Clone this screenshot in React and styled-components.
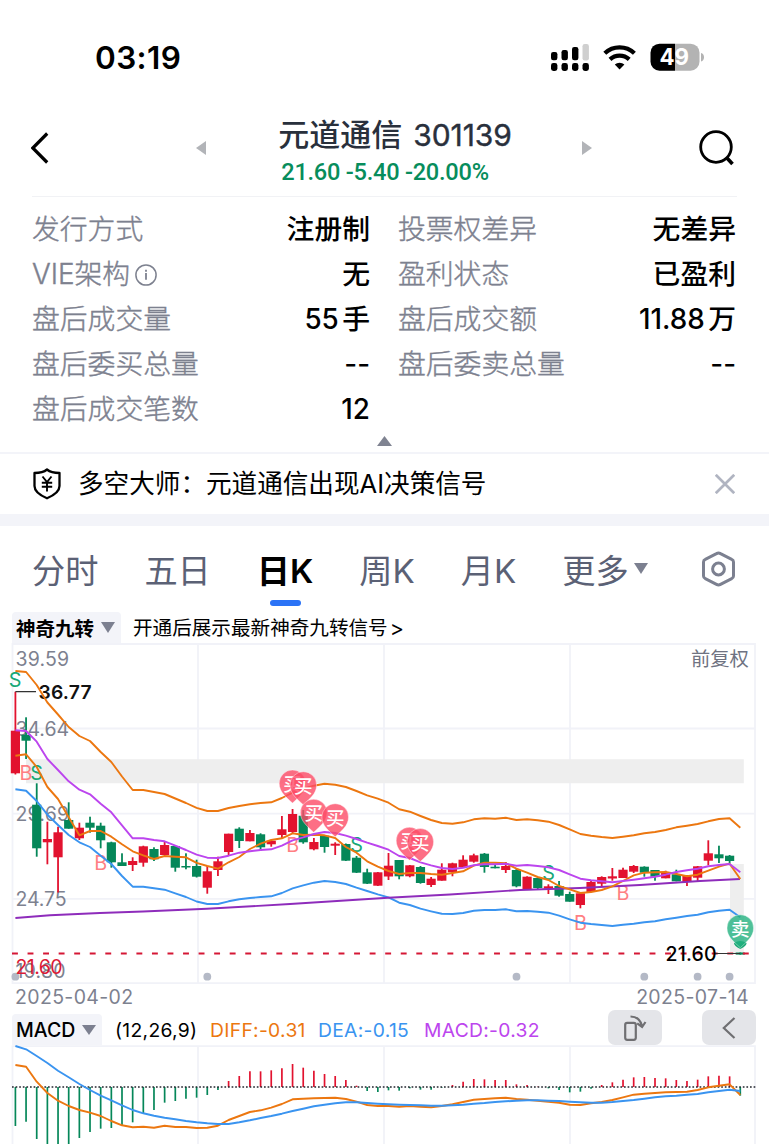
import React from 'react';
import styled, { createGlobalStyle } from 'styled-components';

const GlobalStyle = createGlobalStyle`
  * { box-sizing: border-box; }
  body { margin: 0; background: #fff; }
`;

const sans = `Inter, "Noto Sans CJK SC", sans-serif`;

const Screen = styled.main`
  width: 769px;
  height: 1144px;
  overflow: hidden;
  display: flex;
  flex-direction: column;
  background: #fff;
  color: #000;
  font-family: ${sans};
  white-space: nowrap;
  svg { display: block; flex: none; }
`;

const StatusBar = styled.div`
  height: 100px;
  flex: none;
  display: flex;
  justify-content: space-between;
  padding: 43px 64px 0 95px;
`;

const Clock = styled.div`
  font-size: 31.5px;
  line-height: 30px;
  font-weight: 600;
  letter-spacing: 0.4px;
`;

const StatusIcons = styled.div`
  display: flex;
  gap: 13px;
`;

const Header = styled.header`
  height: 97px;
  flex: none;
  margin: 0 32px;
  border-bottom: 1px solid #f1f2f5;
  display: grid;
  grid-template-columns: 174px 1fr 153px;
`;

const HeaderSide = styled.div`
  display: flex;
  align-items: center;
  justify-content: space-between;
  height: 96px;
  padding-right: ${(p) => p.$end || 0}px;
  margin-left: ${(p) => p.$start || 0}px;
`;

const Title = styled.div`
  padding-top: 17px;
  display: flex;
  flex-direction: column;
  align-items: center;
`;

const StockName = styled.div`
  display: flex;
  gap: 11px;
  height: 36px;
  line-height: 36px;
  font-size: 31px;
  font-weight: 500;
  color: #29303c;
`;

const Code = styled.span`
  font-size: 30px;
  font-weight: 400;
  letter-spacing: -0.1px;
  -webkit-text-stroke: 0.4px #29303c;
`;

const Quote = styled.div`
  margin: 6px 20px 0 0;
  font: 500 23.6px/26px Roboto, sans-serif;
  letter-spacing: -0.25px;
  color: #078d5c;
`;

const Facts = styled.section`
  flex: none;
  height: 255px;
  padding: 10px 33px 0 32px;
  display: flex;
  flex-direction: column;
  align-items: center;
  gap: 4px;
`;

const FactGrid = styled.div`
  width: 100%;
  display: grid;
  grid-template-columns: 338px 338px;
  column-gap: 28px;
  grid-auto-rows: 45px;
`;

const Fact = styled.div`
  display: flex;
  align-items: center;
  justify-content: space-between;
  font-size: 27.8px;
  line-height: 45px;
`;

const FactLabel = styled.span`
  display: flex;
  align-items: center;
  gap: 5px;
  color: #7d818f;
  font-weight: 300;
  -webkit-text-stroke: 0.4px #7d818f;
`;

const FactValue = styled.span`
  font-weight: 500;
  word-spacing: -4px;
`;

const Alert = styled.section`
  flex: none;
  height: 74px;
  border-top: 2px solid #f3f4f9;
  border-bottom: 12px solid #f3f4f9;
  padding: 0 34px 0 33px;
  display: flex;
  align-items: center;
`;

const AlertText = styled.div`
  margin-left: 17px;
  flex: 1;
  font-size: 25.6px;
  line-height: 60px;
`;

const Tabs = styled.nav`
  flex: none;
  height: 82px;
  padding: 0 33px 0 32px;
  display: flex;
  gap: 46px;
`;

const Tab = styled.div`
  position: relative;
  height: 84px;
  display: flex;
  align-items: center;
  gap: 5px;
  font-size: 33.2px;
  font-weight: ${(p) => (p.$active ? 600 : 400)};
  color: ${(p) => (p.$active ? '#000' : '#5b6175')};
  ${(p) =>
    p.$active &&
    `&::after {
      content: '';
      position: absolute;
      left: 50%;
      bottom: 4px;
      width: 31px;
      height: 6px;
      margin-left: -15.5px;
      border-radius: 3px;
      background: #2b73f6;
    }`}
`;

const TabSettings = styled.div`
  margin-left: auto;
  height: 86px;
  display: flex;
  align-items: center;
`;

const StrategyRow = styled.div`
  flex: none;
  height: 35px;
  padding: 4px 12px 0;
  display: flex;
  align-items: center;
`;

const Chip = styled.div`
  height: 31px;
  width: ${(p) => p.$width}px;
  padding: 0 6px 0 4px;
  border-radius: 4px 4px 0 0;
  background: #f3f4f9;
  display: flex;
  align-items: center;
  justify-content: space-between;
  font-size: 19.5px;
  font-weight: ${(p) => p.$weight};
`;

const Hint = styled.div`
  margin-left: 12px;
  display: flex;
  align-items: center;
  gap: 2px;
  font-size: 19.6px;
  line-height: 30px;
`;

const Arrow = styled.span`
  font-size: 21.5px;
`;

const Dates = styled.div`
  flex: none;
  height: 25px;
  padding: 1px 20px 0 15px;
  display: flex;
  justify-content: space-between;
  font-size: 19.5px;
  line-height: 24px;
  letter-spacing: 0.35px;
  color: #7d818f;
`;

const MacdRow = styled.div`
  flex: none;
  height: 36px;
  padding: 1px 13px 0 12px;
  display: flex;
  align-items: flex-start;
`;

const MacdSelect = styled(Chip)`
  margin-top: 4px;
`;

const MacdFigures = styled.div`
  flex: 1;
  margin: 4px 0 0 13px;
  display: flex;
  font-size: 19.3px;
  line-height: 32px;
  letter-spacing: 0.3px;
`;

const Figure = styled.span`
  color: ${(p) => p.$color};
  width: ${(p) => p.$width}px;
`;

const ChartButton = styled.div`
  width: 54px;
  height: 35px;
  margin-left: ${(p) => p.$gap || 0}px;
  border-radius: 7px;
  background: #e4e5e9;
  display: flex;
  align-items: center;
  justify-content: center;
`;

const SignalIcon = () => (
  <svg width="40" height="29" viewBox="550 43 40 29">
    {[551, 561.5, 572, 582.5].map((x, i) => (
      <g key={x}>
        <rect x={x} y={[52, 50, 47, 44][i]} width="6.4" height={[8.3, 10.3, 13.3, 16.5][i]} rx="2.2" fill={i === 3 ? '#cfcfcf' : '#000'} />
        <rect x={x} y="63" width="6.4" height="8" rx="2.4" />
      </g>
    ))}
  </svg>
);

const WifiIcon = () => (
  <svg width="34" height="29" viewBox="603 43 34 29" fill="none" stroke="#000" strokeWidth="4.3">
    <path d="M604.8 53.2a21.6 21.6 0 0 1 29.6 0" />
    <path d="M610 59.4a14.2 14.2 0 0 1 19.2 0" />
    <path d="M619.6 69.400l-4.800-4.800a7 7 0 0 1 9.600 0z" fill="#000" stroke="none" />
  </svg>
);

const BatteryIcon = () => (
  <svg width="55" height="29" viewBox="650 43 55 29">
    <path d="M675 43.700h-15.500a9 9 0 0 0-9 9v9a9 9 0 0 0 9 9H675z" />
    <path d="M675 43.700h15.500a9 9 0 0 1 9 9v9a9 9 0 0 1-9 9H675z" fill="#b3b3b3" />
    <path d="M701 53v8.500c2-.5 3-2.300 3-4.250s-1-3.750-3-4.250z" fill="#b3b3b3" />
    <text x="659.500" y="65.200" fontFamily="Inter, sans-serif" fontWeight="700" fontSize="22.300" fill="#fff">49</text>
  </svg>
);

const Triangle = ({ w, h, dir, color }) => {
  const d = {
    left: `M${w} 0V${h}L0 ${h / 2}z`,
    right: `M0 0V${h}L${w} ${h / 2}z`,
    up: `M0 ${h}H${w}L${w / 2} 0z`,
    down: `M0 0H${w}L${w / 2} ${h}z`,
  }[dir];
  return (
    <svg width={w} height={h}>
      <path d={d} fill={color} />
    </svg>
  );
};

const BackIcon = () => (
  <svg width="18" height="34" viewBox="0 0 18 34" fill="none" stroke="#000" strokeWidth="3.200">
    <path d="M16.200 2.500L1.800 17l14.400 14.500" />
  </svg>
);

const SearchIcon = () => (
  <svg width="36" height="36" viewBox="0 0 36 36" fill="none" stroke="#000" strokeWidth="2.800">
    <circle cx="17" cy="17" r="15.300" />
    <path d="M27.500 27.500l6 6.500" strokeWidth="3.600" />
  </svg>
);

const InfoIcon = () => (
  <svg width="22" height="22" viewBox="0 0 22 22" fill="none" stroke="#7d818f" strokeWidth="1.500">
    <circle cx="11" cy="11" r="10.100" />
    <path d="M11 9v6.800M11 5.800v2" strokeWidth="1.800" />
  </svg>
);

const ShieldIcon = () => (
  <svg width="28" height="32" viewBox="0 0 28 32" fill="none" stroke="#000">
    <path d="M14 1.500C11 4 6 5 1.500 5V18c0 6 6 9.500 12.500 12.300C20.500 27.500 26.500 24 26.500 18V5C22 5 17 4 14 1.500z" strokeWidth="2.300" strokeLinejoin="round" />
    <path d="M9.500 8.500l4.500 5.500 4.500-5.500M14 14v9.500M8.800 14.800h10.400M8.800 18.800h10.400" strokeWidth="1.900" />
  </svg>
);

const CloseIcon = () => (
  <svg width="20" height="20" viewBox="0 0 20 20" stroke="#b0b4c1" strokeWidth="2.700">
    <path d="M.8.8l18.400 18.400M19.200.8L.8 19.200" />
  </svg>
);

const HexIcon = () => (
  <svg width="35" height="36" viewBox="0 0 35 36" fill="none" stroke="#7c8090" strokeWidth="3">
    <path d="M15.500 2.600L4.300 8.300a3 3 0 0 0-1.800 2.700v14a3 3 0 0 0 1.800 2.700l11.200 5.700a4 4 0 0 0 4 0l11.200-5.700a3 3 0 0 0 1.800-2.700V11a3 3 0 0 0-1.800-2.700L19.500 2.600a4 4 0 0 0-4 0z" />
    <circle cx="17.500" cy="18" r="5.900" />
  </svg>
);

const RotateIcon = () => (
  <svg width="23" height="26" viewBox="0 0 23 26" fill="none" stroke="#6f6f72" strokeWidth="2.200">
    <rect x="1.200" y="7.800" width="10.600" height="17" rx="2" />
    <path d="M6.500 1.500c6 0 10 3.500 11.600 9.500M13.200 8.300l4.900 3.700 3.400-5" />
  </svg>
);

const CollapseIcon = () => (
  <svg width="14" height="22" viewBox="0 0 14 22" fill="none" stroke="#6f6f72" strokeWidth="2.200">
    <path d="M12.500 1L1.800 11l10.700 10" />
  </svg>
);

const RED = '#e2122f';
const GREEN = '#058759';
const cx = (i) => 15.4 + i * 10.66;

// [direction, high, body top, body bottom, low] in chart pixels
const candles = [
  ['r', 691.7, 730.7, 773.3, 774.5], ['g', 717.3, 734.7, 740.7, 759], ['g', 783.3, 804.7, 848.3, 856.7],
  ['r', 821.7, 839, 842.3, 864.3], ['r', 826.7, 832.3, 857.3, 892.5], ['g', 802.3, 820, 828.7, 828.7],
  ['r', 822.7, 827.7, 838.3, 840], ['g', 816.7, 822.7, 827.7, 832.7], ['g', 822.7, 825.7, 840.3, 848.3],
  ['g', 841.7, 842.3, 862.3, 867.7], ['g', 853.3, 862.3, 866, 866], ['r', 857.3, 861, 865, 871],
  ['r', 845.7, 846.3, 862.7, 866.7], ['g', 847.3, 849, 859.3, 861], ['r', 841.7, 845, 855, 855],
  ['g', 846, 846, 867.7, 871.7], ['g', 853.3, 866, 867.5, 869.3], ['g', 859.7, 866, 876.7, 877.5],
  ['r', 866, 871.3, 887.7, 893.7], ['r', 856.7, 861.3, 870, 876], ['r', 833.7, 833.7, 852, 855.7],
  ['g', 827.3, 828.7, 841, 848], ['r', 830, 833, 841.3, 841.3], ['g', 833.3, 834.3, 847.3, 850.7],
  ['r', 840, 840.7, 844.3, 846.7], ['r', 816, 829.3, 835, 838.3], ['r', 809, 814, 832, 833.3],
  ['g', 810, 815.7, 842.3, 843.7], ['r', 838, 842, 849.3, 850.3], ['g', 835, 835.7, 847, 852.7],
  ['r', 842.3, 843.7, 845.7, 855], ['g', 843.5, 844, 860.7, 861], ['g', 856, 857.7, 872.7, 873],
  ['g', 868.7, 872.3, 883.7, 884], ['r', 872, 872.3, 885.7, 886], ['r', 853, 865.7, 876.5, 880],
  ['g', 860, 860, 876.3, 879.3], ['r', 865, 865.3, 876.3, 877.3], ['g', 866, 867, 883, 883.7],
  ['r', 877, 878.7, 885, 887], ['r', 863.3, 869.7, 880.7, 880.7], ['r', 862.7, 863.3, 872.3, 876.3],
  ['r', 855.3, 859.7, 867, 868], ['r', 853.7, 855.3, 861.7, 862.7], ['g', 853, 853.7, 867, 872.7],
  ['g', 864.3, 866.7, 868.3, 868.3], ['r', 862, 866, 870, 873], ['g', 868.7, 870, 886.3, 887.3],
  ['r', 876.3, 876.7, 890, 890], ['g', 877, 878, 888, 889.7], ['r', 884.3, 886.3, 888.7, 894],
  ['g', 881, 886, 895.7, 896.7], ['g', 891.7, 894, 901.7, 901.7], ['r', 892.7, 893.3, 905, 908.3],
  ['r', 880.7, 882, 892, 892.3], ['r', 876.3, 877, 883.7, 886.3], ['r', 868, 876.3, 878.5, 880.7],
  ['r', 867.7, 869.7, 878, 878], ['r', 865, 866, 871.7, 873], ['g', 866.3, 866.7, 872.7, 876.7],
  ['g', 870, 870, 876.7, 880.7], ['r', 870.7, 872.3, 878.3, 878.3], ['g', 869.7, 874.3, 881.3, 881.3],
  ['r', 875, 875.7, 882, 886], ['r', 866, 866.3, 877.7, 881], ['r', 840.3, 853.3, 860.7, 865.3],
  ['g', 845.7, 854.3, 858.3, 863], ['g', 855, 855.7, 861, 863.3], ['g', 952.5, 952.5, 954.6, 954.6],
];

const upperBand = [671, 672, 685, 702.5, 714.5, 727, 736, 741, 752, 762, 776.5, 790, 790, 792, 794, 798.5, 803, 807.8, 811, 811, 808, 806, 804.3, 803, 802.3, 798, 792.7, 788.7, 785.7, 783.7, 784.7, 787, 791, 795.3, 798.7, 802.7, 809.3, 811.7, 816, 820, 823, 823.7, 822.3, 819.3, 818.3, 818.7, 817.7, 820, 819.3, 820.3, 821.7, 825, 829.3, 834, 835.7, 837, 838, 836.7, 835.3, 833.3, 832, 830, 827.3, 825.7, 824, 821.3, 819, 818.3, 827.7];
const midBand = [730.3, 731, 741.7, 759, 770, 781.3, 789.7, 794.3, 803.7, 812.3, 825.3, 838.3, 838.3, 840, 841.3, 845.7, 850, 854.7, 857.7, 858, 855.7, 852.7, 851.3, 850, 849.3, 845.7, 840.3, 837.3, 834, 832, 833, 835.7, 839, 842.7, 846, 849.7, 856, 858, 862.3, 865.3, 868, 869, 867.7, 865.3, 864.3, 864.3, 863.7, 865.7, 865, 866, 867.3, 870, 874.3, 878.7, 880.3, 881.3, 882.3, 881, 879.7, 878.3, 876.7, 874.7, 872, 870.3, 868.7, 866.3, 865, 864, 872.3];
const average = [755.7, 754.3, 767, 787, 799, 817.3, 835.3, 831, 831, 836.7, 844.3, 851.3, 855.3, 859, 856, 856.7, 857.3, 862.8, 866, 868.7, 862.3, 857, 849, 843.7, 840, 838.3, 833.3, 835, 834.7, 835.3, 838, 847, 852.7, 861.3, 866.7, 871, 874, 873, 873, 874, 874.7, 873, 871.3, 865.7, 862.7, 862.7, 863.3, 868.7, 872.7, 877, 880, 886, 889.3, 893, 892, 890, 886.3, 881, 875.3, 872.7, 872.3, 872, 874, 876.3, 874.7, 870.7, 866.7, 863.7, 879];
const lowerBand = [789.3, 790.7, 801, 814.7, 825, 835, 842.3, 847, 855.7, 864, 876, 886.7, 886.7, 888.3, 889.7, 893.3, 897, 901.5, 904, 904, 901.3, 899.3, 898, 897, 896.3, 893, 888.3, 885.3, 882.7, 881, 882, 884, 887.7, 891, 894.3, 897.3, 902.7, 905, 908.7, 911.3, 913.7, 914, 913, 910.7, 910, 910, 909.3, 911.3, 911, 911.7, 912.7, 915.7, 919.3, 922.7, 924, 925, 926, 924.7, 923.7, 922.3, 921.3, 919.3, 917.7, 916, 914.7, 912.3, 910.7, 909.7, 917.3];

const line = (ys) => ys.map((y, i) => `${cx(i).toFixed(1)},${y}`).join(' ');

const marks = [
  ['S', 15.2, 680], ['B', 26, 773], ['S', 36.7, 772.5], ['B', 100.7, 862.5], ['B', 292.7, 845],
  ['S', 356.5, 844.5], ['S', 548.5, 873], ['B', 580.4, 922.5], ['B', 623, 892.5],
];

const Pin = ({ x, y, fill, label }) => (
  <g>
    <path
      d={`M${x} ${y + 19.8}C${x - 6} ${y + 14} ${x - 13.3} ${y + 9} ${x - 13.3} ${y}a13.300 13.300 0 0 1 26.600 0C${x + 13.3} ${y + 9} ${x + 6} ${y + 14} ${x} ${y + 19.8}z`}
      fill={fill}
      fillOpacity="0.8"
      stroke="#fff"
      strokeOpacity="0.5"
      strokeWidth="0.8"
    />
    <text x={x} y={y + 7.8} textAnchor="middle" fontSize="18.500" fontWeight="500" fill="#fff">{label}</text>
  </g>
);

const AxisText = ({ y, color = '#7d818f', children, w = 53.5 }) => (
  <text x="15.500" y={y} fontSize="19.500" fill={color} textLength={w}>{children}</text>
);

const CandleChart = () => (
  <svg width="769" height="341" viewBox="0 643 769 341" fontFamily={sans} fill="none">
    <g stroke="#f1f2f8" strokeWidth="1.800">
      <path d="M12.500 644H755V983.200H12.500zM198 644V983M384 644V983M570 644V983M12.500 728.500H755M12.500 813.600H755M12.500 898.800H755" />
    </g>
    <path d="M26 759.300H743.800V783.300H26zM730 864H743.800V953.500H730z" fill="#eeeeee" />
    <AxisText y="665.500">39.59</AxisText>
    <AxisText y="735.500">34.64</AxisText>
    <AxisText y="821">29.69</AxisText>
    <AxisText y="906" w={51}>24.75</AxisText>
    <AxisText y="977.500" w={50}>19.80</AxisText>
    <text x="691" y="665.500" fontSize="19.300" fill="#6f7382">前复权</text>
    {[15.4, 207.3, 516.5, 644.3, 697.6, 729.6].map((x) => (
      <circle key={x} cx={x} cy="976.700" r="3.900" fill="#b4b9c6" />
    ))}
    {candles.map(([dir, hi, top, bottom, lo], i) => (
      <g key={i} fill={dir === 'r' ? RED : GREEN}>
        <rect x={cx(i) - 0.9} y={hi} width="1.800" height={lo - hi} />
        <rect x={cx(i) - 4.6} y={top} width="9.200" height={bottom - top} />
      </g>
    ))}
    {marks.map(([label, x, y]) => (
      <text key={x} x={x} y={y + 7} fontSize="19.800" textAnchor="middle" fill={label === 'S' ? '#17a877' : '#ff7f83'}>{label}</text>
    ))}
    <path d="M12 953.500H755" stroke="#d51735" strokeWidth="2" strokeDasharray="5.900 9.650" />
    <path d="M15.400 691.700H36M716 953.500H740" stroke="#333" strokeWidth="1.200" />
    <text x="38.500" y="698.500" fontSize="19.300" fontWeight="600" fill="#111" textLength="53">36.77</text>
    <text x="665.500" y="960.500" fontSize="19.500" fontWeight="500" fill="#000" textLength="51">21.60</text>
    <AxisText y="973.500" color="#dc1936" w={47}>21.60</AxisText>
    <g strokeWidth="1.900" strokeLinejoin="round">
      <polyline points={line(lowerBand)} stroke="#3a94f0" />
      <polyline points="15.400,918 50,915.200 100,913 143,911.500 207,908.800 290,904 388,897.800 450,894.500 520,890 580,888 640,885 700,881 740,879" stroke="#8e2cbb" />
      <polyline points={line(average)} stroke="#ec7710" />
      <polyline points={line(midBand)} stroke="#bc45ee" />
      <polyline points={line(upperBand)} stroke="#ec7710" />
    </g>
    <Pin x={292.5} y={783.3} fill="#fd4b66" label="买" />
    <Pin x={303.3} y={785} fill="#fd4b66" label="买" />
    <Pin x={313.7} y={812.5} fill="#fd4b66" label="买" />
    <Pin x={335.2} y={817} fill="#fd4b66" label="买" />
    <Pin x={409.5} y={840.5} fill="#fd4b66" label="买" />
    <Pin x={420.3} y={841.8} fill="#fd4b66" label="买" />
    <path d="M734 943q6.300-4 12.600 0q0 3-6.300 6q-6.300-3-6.300-6z" fill="#18a673" />
    <Pin x={740.3} y={928} fill="#23b27f" label="卖" />
  </svg>
);

const bars = [378, 365, 417, 445, 450, 440, 414, 396, 386, 384, 378, 367, 341, 330, 308, 303, 296, 293, 285, 270, 243, 228, 214, 214, 211, 205, 192, 203, 212, 222, 228, 240, 257, 273, 276, 271, 272, 265, 269, 269, 263, 255, 245, 237, 238, 240, 240, 253, 255, 260, 265, 270, 277, 275, 266, 255, 247, 239, 232, 231, 234, 235, 240, 243, 239, 229, 227, 229, 287];
const diff = [195, 200, 245, 279, 302, 318, 330, 338, 348, 363, 376, 382, 380, 383, 377, 381, 381, 384, 383, 377, 360, 348, 336, 331, 323, 312, 298, 296, 295, 294, 293, 297, 305, 315, 318, 318, 320, 318, 320, 322, 318, 313, 306, 299, 297, 295, 293, 297, 299, 302, 305, 308, 314, 315, 310, 306, 300, 292, 284, 281, 279, 277, 276, 275, 270, 262, 257, 253, 285];
const dea = [138, 148, 168, 189, 212, 232, 252, 270, 287, 301, 316, 330, 340, 347, 353, 358, 363, 367, 370, 372, 372, 367, 361, 354, 348, 341, 333, 326, 319, 314, 310, 307, 307, 309, 311, 313, 314, 315, 316, 317, 317, 316, 314, 311, 309, 306, 304, 302, 301, 301, 302, 303, 305, 307, 308, 308, 306, 303, 300, 296, 292, 289, 287, 284, 282, 277, 273, 269, 273];
const third = (values) => values.map((v) => (v / 3).toFixed(1));

const MacdChart = () => (
  <svg width="769" height="99" viewBox="0 45 769 99" fill="none">
    <path d="M12.500 144V46.200H755V144M198 46V144M384 46V144M570 46V144" stroke="#f1f2f8" strokeWidth="1.800" />
    {bars.map((v, i) => (
      <path key={i} d={`M${cx(i)} 87V${v / 3}`} stroke={v < 261 ? RED : GREEN} strokeWidth="1.700" />
    ))}
    <path d="M12 87H756" stroke="#22252d" strokeWidth="1.500" strokeDasharray="1.700 1.900" />
    <g strokeWidth="1.900" strokeLinejoin="round">
      <polyline points={line(third(diff))} stroke="#ec7710" />
      <polyline points={line(third(dea))} stroke="#3a94f0" />
    </g>
  </svg>
);

const facts = [
  ['发行方式', '注册制'], ['投票权差异', '无差异'],
  ['VIE架构', '无', true], ['盈利状态', '已盈利'],
  ['盘后成交量', '55 手'], ['盘后成交额', '11.88 万'],
  ['盘后委买总量', '--'], ['盘后委卖总量', '--'],
  ['盘后成交笔数', '12'],
];

export default function App() {
  return (
    <Screen>
      <GlobalStyle />
      <StatusBar>
        <Clock>03:19</Clock>
        <StatusIcons>
          <SignalIcon />
          <WifiIcon />
          <BatteryIcon />
        </StatusIcons>
      </StatusBar>
      <Header>
        <HeaderSide $start={-1}>
          <BackIcon />
          <Triangle w={10} h={14} dir="left" color="#b2b4b8" />
        </HeaderSide>
        <Title>
          <StockName>元道通信<Code>301139</Code></StockName>
          <Quote>21.60 -5.40 -20.00%</Quote>
        </Title>
        <HeaderSide $start={-2} $end={2}>
          <Triangle w={10} h={14} dir="right" color="#b2b4b8" />
          <SearchIcon />
        </HeaderSide>
      </Header>
      <Facts>
        <FactGrid>
          {facts.map(([label, value, info]) => (
            <Fact key={label}>
              <FactLabel>{label}{info && <InfoIcon />}</FactLabel>
              <FactValue>{value}</FactValue>
            </Fact>
          ))}
        </FactGrid>
        <Triangle w={15} h={10} dir="up" color="#7f8391" />
      </Facts>
      <Alert>
        <ShieldIcon />
        <AlertText>多空大师：元道通信出现AI决策信号</AlertText>
        <CloseIcon />
      </Alert>
      <Tabs>
        <Tab>分时</Tab>
        <Tab>五日</Tab>
        <Tab $active>日K</Tab>
        <Tab>周K</Tab>
        <Tab>月K</Tab>
        <Tab>更多<Triangle w={14} h={11} dir="down" color="#7c8090" /></Tab>
        <TabSettings><HexIcon /></TabSettings>
      </Tabs>
      <StrategyRow>
        <Chip $width={109} $weight={700}>神奇九转<Triangle w={14} h={11} dir="down" color="#7c8090" /></Chip>
        <Hint>开通后展示最新神奇九转信号<Arrow>&gt;</Arrow></Hint>
      </StrategyRow>
      <CandleChart />
      <Dates><span>2025-04-02</span><span>2025-07-14</span></Dates>
      <MacdRow>
        <MacdSelect $width={90} $weight={500}>MACD<Triangle w={14} h={10} dir="down" color="#7c8090" /></MacdSelect>
        <MacdFigures>
          <Figure $width={95} $color="#000">(12,26,9)</Figure>
          <Figure $width={108} $color="#ec7710">DIFF:-0.31</Figure>
          <Figure $width={106} $color="#3a94f0">DEA:-0.15</Figure>
          <Figure $width={120} $color="#bc45ee">MACD:-0.32</Figure>
        </MacdFigures>
        <ChartButton><RotateIcon /></ChartButton>
        <ChartButton $gap={40}><CollapseIcon /></ChartButton>
      </MacdRow>
      <MacdChart />
    </Screen>
  );
}
